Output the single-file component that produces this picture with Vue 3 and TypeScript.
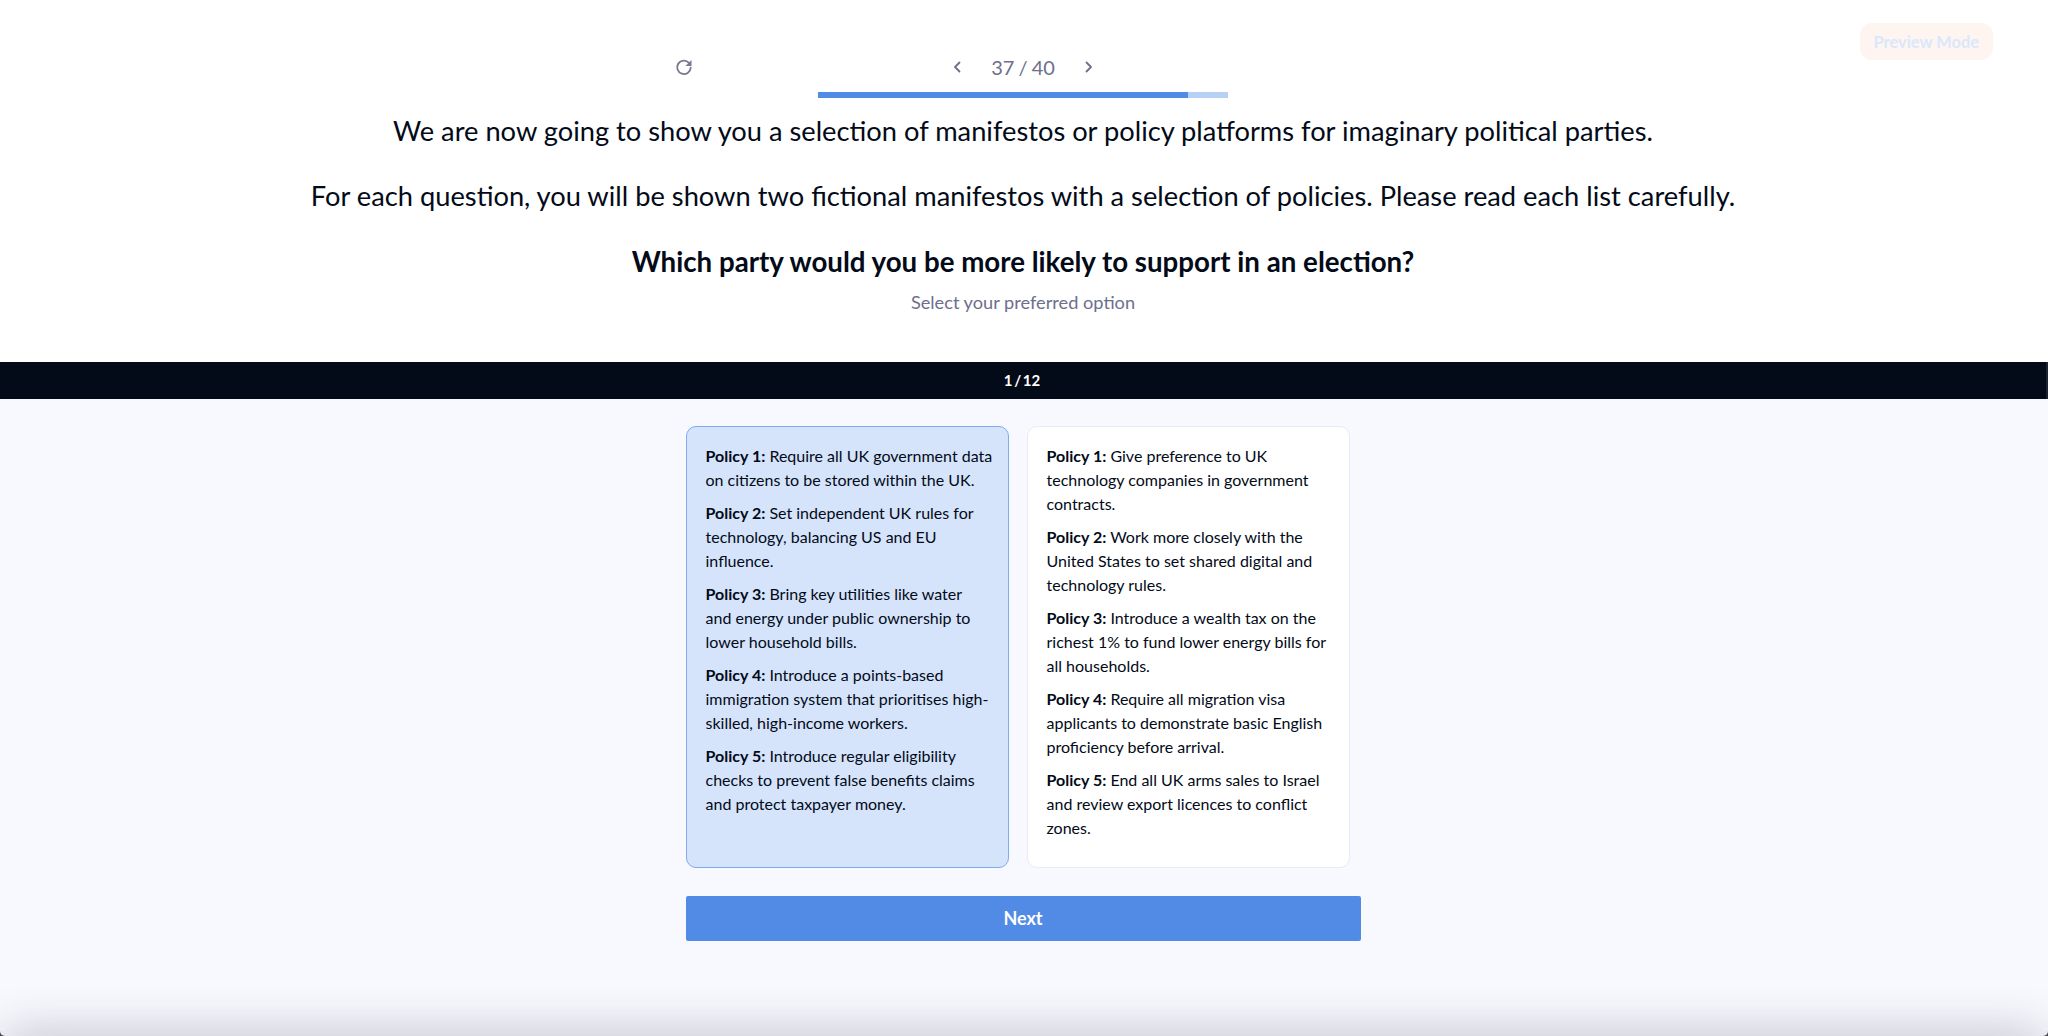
<template>
  <div class="page">
    <div class="preview-badge">Preview Mode</div>

    <header class="top">
      <div class="nav-row">
        <button class="refresh-btn" aria-label="Restart">
          <svg width="18" height="18" viewBox="0 0 24 24" fill="none">
            <path d="M18.6 6.4A9 9 0 1 0 20.9 13" stroke="#777992" stroke-width="2.5" stroke-linecap="round" />
            <path d="M22 2.6v8h-8z" fill="#777992" />
          </svg>
        </button>
        <div class="pager">
          <svg width="10" height="14" viewBox="0 0 10 14" fill="none" stroke="#6d6f8c" stroke-width="1.8" stroke-linecap="round" stroke-linejoin="round">
            <path d="M7.5 2.5 3 7l4.5 4.5" />
          </svg>
          <span class="pager-text">{{ current }} / {{ total }}</span>
          <svg width="10" height="14" viewBox="0 0 10 14" fill="none" stroke="#6d6f8c" stroke-width="1.8" stroke-linecap="round" stroke-linejoin="round">
            <path d="M2.5 2.5 7 7l-4.5 4.5" />
          </svg>
        </div>
      </div>
      <div class="progress-track">
        <div class="progress-fill" :style="{ width: `${progressPercentage}%` }"></div>
      </div>

      <p class="intro">We are now going to show you a selection of manifestos or policy platforms for imaginary political parties.</p>
      <p class="intro">For each question, you will be shown two fictional manifestos with a selection of policies. Please read each list carefully.</p>
      <p class="intro question">Which party would you be more likely to support in an election?</p>
      <p class="hint">Select your preferred option</p>
    </header>

    <div class="step-bar">1 / 12</div>

    <main class="content">
      <div class="choice">
        <div class="cards">
          <div
            v-for="(card, i) in cards"
            :key="i"
            class="card"
            :class="{ selected: i === selected }"
          >
            <p v-for="(policy, n) in card" :key="n" class="policy">
              <strong>Policy {{ n + 1 }}:</strong> {{ policy }}
            </p>
          </div>
        </div>
        <button class="next-btn">Next</button>
      </div>
    </main>

    <div class="bottom-shade"></div>
  </div>
</template>

<script setup lang="ts">
import { computed } from 'vue'

const current = 37
const total = 40
const selected = 0

const progressPercentage = computed(() => 90.2)

const cards: string[][] = [
  [
    'Require all UK government data on citizens to be stored within the UK.',
    'Set independent UK rules for technology, balancing US and EU influence.',
    'Bring key utilities like water and\u00a0energy under public ownership to lower household bills.',
    'Introduce a points-based immigration system that prioritises high-skilled, high-income workers.',
    'Introduce regular eligibility checks to prevent false benefits claims and protect taxpayer money.'
  ],
  [
    'Give preference to UK technology companies in government contracts.',
    'Work more closely with the United States to set shared digital and technology rules.',
    'Introduce a wealth tax on the richest 1% to fund lower energy bills for all households.',
    'Require all migration visa applicants to demonstrate basic English proficiency before arrival.',
    'End all UK arms sales to Israel and review export licences to conflict zones.'
  ]
]
</script>

<style>
html,
body {
  margin: 0;
  background: #4a4a52;
}
</style>

<style scoped>
.page {
  position: relative;
  height: 1036px;
  overflow: hidden;
  display: flex;
  flex-direction: column;
  border-radius: 0 0 5px 5px;
  font-family: "Lato", "Open Sans", sans-serif;
  color: #030a18;
  background: #f8f9fe;
}

.preview-badge {
  position: absolute;
  top: 23px;
  right: 55px;
  padding: 9px 14px;
  border-radius: 12px;
  background: #fef5f1;
  color: #dbe7fb;
  font-size: 16.4px;
  font-weight: 700;
  line-height: 19px;
}

.top {
  height: 362px;
  box-sizing: border-box;
  padding: 50px 2px 0 0;
  background: #fff;
  display: flex;
  flex-direction: column;
  align-items: center;
}

.nav-row {
  position: relative;
  width: 675px;
  height: 34px;
  display: flex;
  justify-content: center;
  align-items: center;
}

.refresh-btn {
  position: absolute;
  left: -11px;
  top: 8px;
  padding: 0;
  border: none;
  background: none;
  display: flex;
}

.pager {
  display: flex;
  align-items: center;
  gap: 29px;
}

.pager-text {
  font-size: 20px;
  word-spacing: -1px;
  color: #6d6f8c;
}

.progress-track {
  width: 410px;
  height: 6px;
  margin-top: 8px;
  background: #b6d0f6;
}

.progress-fill {
  height: 100%;
  background: #528be6;
}

.intro {
  margin: 0 0 39px;
  font-size: 27.27px;
  line-height: 26px;
  text-align: center;
  white-space: nowrap;
}

.top > .intro:first-of-type {
  margin-top: 20px;
}

.question {
  margin: 1px 0 0;
  font-size: 27.7px;
  font-weight: 700;
}

.hint {
  margin: 15px 0 0;
  font-size: 18.2px;
  line-height: 24px;
  color: #6d6f8c;
}

.step-bar {
  height: 37px;
  padding-right: 2px;
  border-right: 2px solid #1c2230;
  background: #030a18;
  color: #fff;
  font-size: 15px;
  font-weight: 700;
  word-spacing: -2px;
  line-height: 36px;
  text-align: center;
}

.content {
  flex: 1;
  display: flex;
  justify-content: center;
  padding: 27px 2px 0 0;
}

.choice {
  width: 675px;
}

.cards {
  display: flex;
  gap: 18px;
  height: 442px;
}

.card {
  width: 323px;
  box-sizing: border-box;
  padding: 17px 11px 18px 19px;
  border: 1px solid #e8ebf2;
  border-radius: 10px;
  background: #fff;
  display: flex;
  flex-direction: column;
  gap: 9px;
}

.card.selected {
  border-color: #7fabf0;
  background: #d5e4fb;
}

.policy {
  margin: 0;
  font-size: 16px;
  line-height: 24px;
}

.policy strong {
  font-weight: 700;
}

.next-btn {
  width: 100%;
  height: 45px;
  margin-top: 28px;
  padding: 0 0 2px;
  border: none;
  border-radius: 2px;
  background: #528be6;
  color: #fff;
  font-family: inherit;
  font-size: 18px;
  font-weight: 700;
}

.bottom-shade {
  position: absolute;
  left: 0;
  right: 0;
  bottom: -40px;
  height: 40px;
  border-radius: 30px;
  box-shadow: 0 0 50px rgba(40, 40, 60, 0.3);
}
</style>
